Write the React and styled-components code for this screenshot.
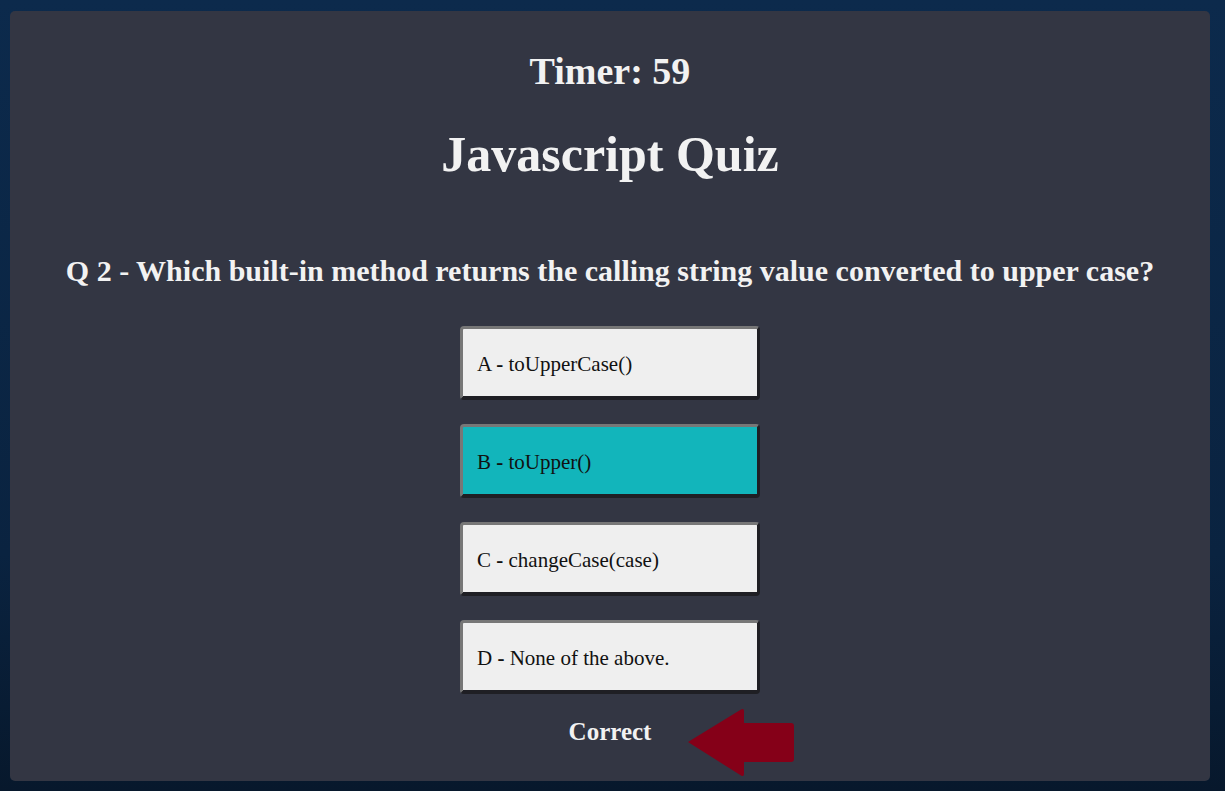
import React from "react";
import styled, { createGlobalStyle } from "styled-components";

const GlobalStyle = createGlobalStyle`
  html, body {
    margin: 0;
    padding: 0;
    height: 100%;
  }
  body {
    background: linear-gradient(180deg, #0c2a4c 0%, #0a2340 70%, #07182c 100%);
    font-family: "Liberation Serif", "DejaVu Serif", serif;
  }
`;

const Page = styled.div`
  padding: 11px 15px 10px 10px;
  height: 791px;
  box-sizing: border-box;
`;

const Card = styled.main`
  background: #333643;
  border-radius: 5px;
  height: 100%;
  display: flex;
  flex-direction: column;
  align-items: center;
  color: #f2f2f2;
`;

const Timer = styled.h2`
  margin: 40px 0 0;
  font-size: 38px;
  font-weight: bold;
  line-height: 40px;
`;

const Title = styled.h1`
  margin: 35px 0 0;
  font-size: 50px;
  font-weight: bold;
  line-height: 56px;
`;

const Question = styled.h3`
  margin: 72px 0 0;
  font-size: 30px;
  font-weight: bold;
  line-height: 34px;
`;

const Answers = styled.div`
  display: flex;
  flex-direction: column;
  gap: 24px;
  margin-top: 38px;
`;

const Answer = styled.button`
  width: 300px;
  height: 74px;
  box-sizing: border-box;
  text-align: left;
  padding: 4px 0 0 14px;
  font-family: inherit;
  font-size: 21px;
  color: #111;
  background: ${(p) => (p.$selected ? "#12b5bb" : "#efefef")};
  border-style: solid;
  border-width: 3px 3px 4px 3px;
  border-color: #777 #1f1f24 #1f1f24 #777;
  border-radius: 4px;
  cursor: pointer;
`;

const Dash = styled.b`
  font-weight: bold;
`;

const Result = styled.div`
  position: relative;
  margin-top: 24px;
  font-size: 25px;
  font-weight: bold;
  line-height: 28px;
`;

const Arrow = styled.svg`
  position: absolute;
  left: 118px;
  top: -10px;
`;

const answers = [
  { id: "A", text: "toUpperCase()" },
  { id: "B", text: "toUpper()", selected: true },
  { id: "C", text: "changeCase(case)" },
  { id: "D", text: "None of the above." },
];

export default function App() {
  return (
    <>
      <GlobalStyle />
      <Page>
        <Card>
          <Timer>Timer: 59</Timer>
          <Title>Javascript Quiz</Title>
          <Question>
            Q 2 - Which built-in method returns the calling string value
            converted to upper case?
          </Question>
          <Answers>
            {answers.map((a) => (
              <Answer key={a.id} $selected={a.selected}>
                {a.id} <Dash>-</Dash> {a.text}
              </Answer>
            ))}
          </Answers>
          <Result>
            Correct
            <Arrow width="108" height="70" viewBox="0 0 108 70">
              <path
                d="M1 34 L54 1.5 Q57 0 57 3 L57 15 L104 15 Q107 15 107 18 L107 51 Q107 54 104 54 L57 54 L57 66 Q57 69 54 67.5 Z"
                fill="#850018"
              />
            </Arrow>
          </Result>
        </Card>
      </Page>
    </>
  );
}
